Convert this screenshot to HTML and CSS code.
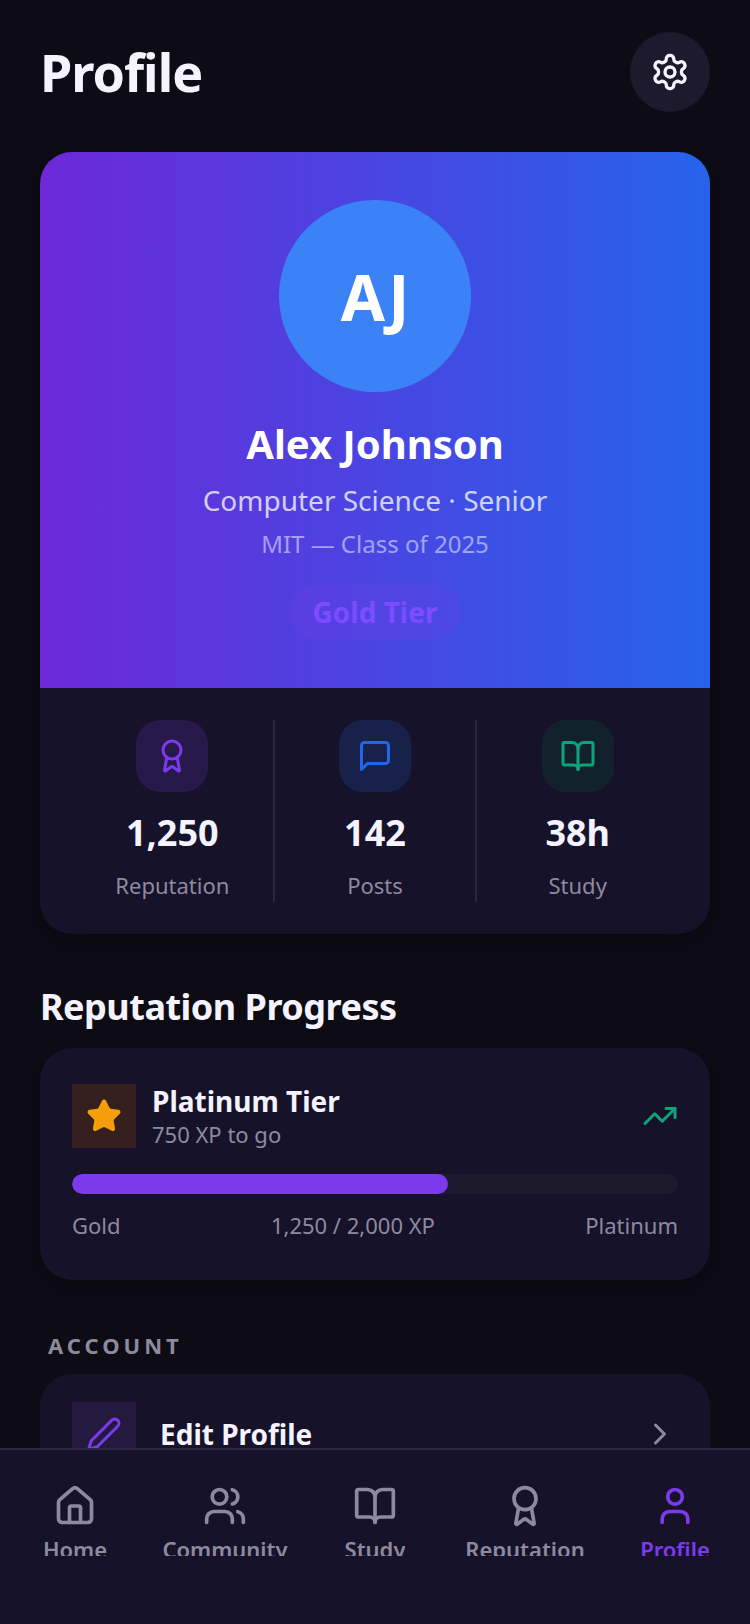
FILE: index.html
```html
<!DOCTYPE html>
<html lang="en">
<head>
<meta charset="utf-8">
<title>Profile</title>
<link rel="stylesheet" href="styles.css">
</head>
<body>
<div class="app">
  <main class="main">
    <header class="header">
      <h1 class="title">Profile</h1>
      <button class="settings" aria-label="Settings">
        <svg class="ic40" viewBox="0 0 24 24"><path d="M12.22 2h-.44a2 2 0 0 0-2 2v.18a2 2 0 0 1-1 1.73l-.43.25a2 2 0 0 1-2 0l-.15-.08a2 2 0 0 0-2.73.73l-.22.38a2 2 0 0 0 .73 2.73l.15.1a2 2 0 0 1 1 1.72v.51a2 2 0 0 1-1 1.74l-.15.09a2 2 0 0 0-.73 2.73l.22.38a2 2 0 0 0 2.73.73l.15-.08a2 2 0 0 1 2 0l.43.25a2 2 0 0 1 1 1.73V20a2 2 0 0 0 2 2h.44a2 2 0 0 0 2-2v-.18a2 2 0 0 1 1-1.73l.43-.25a2 2 0 0 1 2 0l.15.08a2 2 0 0 0 2.73-.73l.22-.39a2 2 0 0 0-.73-2.73l-.15-.08a2 2 0 0 1-1-1.74v-.5a2 2 0 0 1 1-1.74l.15-.09a2 2 0 0 0 .73-2.73l-.22-.38a2 2 0 0 0-2.73-.73l-.15.08a2 2 0 0 1-2 0l-.43-.25a2 2 0 0 1-1-1.73V4a2 2 0 0 0-2-2z"/><circle cx="12" cy="12" r="3"/></svg>
      </button>
    </header>

    <section class="profile-card">
      <div class="hero">
        <div class="avatar">AJ</div>
        <div class="name">Alex Johnson</div>
        <div class="major">Computer Science · Senior</div>
        <div class="school">MIT — Class of 2025</div>
        <div class="tier">Gold Tier</div>
      </div>
      <div class="stats">
        <div class="stat">
          <div class="stat-icon purple"><svg class="ic36" viewBox="0 0 24 24"><path d="m15.477 12.89 1.515 8.526a.5.5 0 0 1-.81.47l-3.58-2.687a1 1 0 0 0-1.197 0l-3.586 2.686a.5.5 0 0 1-.81-.469l1.514-8.526"/><circle cx="12" cy="8" r="6"/></svg></div>
          <div class="stat-value">1,250</div>
          <div class="stat-label">Reputation</div>
        </div>
        <div class="stat">
          <div class="stat-icon blue"><svg class="ic36" viewBox="0 0 24 24"><path d="M21 15a2 2 0 0 1-2 2H7l-4 4V5a2 2 0 0 1 2-2h14a2 2 0 0 1 2 2z"/></svg></div>
          <div class="stat-value">142</div>
          <div class="stat-label">Posts</div>
        </div>
        <div class="stat">
          <div class="stat-icon green"><svg class="ic36" viewBox="0 0 24 24"><path d="M12 7v14"/><path d="M3 18a1 1 0 0 1-1-1V4a1 1 0 0 1 1-1h5a4 4 0 0 1 4 4 4 4 0 0 1 4-4h5a1 1 0 0 1 1 1v13a1 1 0 0 1-1 1h-6a3 3 0 0 0-3 3 3 3 0 0 0-3-3z"/></svg></div>
          <div class="stat-value">38h</div>
          <div class="stat-label">Study</div>
        </div>
      </div>
    </section>

    <h2 class="section-title">Reputation Progress</h2>
    <section class="progress-card">
      <div class="progress-top">
        <div class="star-box"><svg class="ic36 star" viewBox="0 0 24 24"><path d="M11.525 2.295a.53.53 0 0 1 .95 0l2.31 4.679a2.123 2.123 0 0 0 1.595 1.16l5.166.756a.53.53 0 0 1 .294.904l-3.736 3.638a2.123 2.123 0 0 0-.611 1.878l.882 5.14a.53.53 0 0 1-.771.56l-4.618-2.428a2.122 2.122 0 0 0-1.973 0L6.396 21.01a.53.53 0 0 1-.77-.56l.881-5.139a2.122 2.122 0 0 0-.611-1.879L2.16 9.795a.53.53 0 0 1 .294-.906l5.165-.755a2.122 2.122 0 0 0 1.597-1.16z"/></svg></div>
        <div class="progress-text">
          <div class="progress-title">Platinum Tier</div>
          <div class="progress-sub">750 XP to go</div>
        </div>
        <svg class="ic36 trend" viewBox="0 0 24 24"><polyline points="22 7 13.5 15.5 8.5 10.5 2 17"/><polyline points="16 7 22 7 22 13"/></svg>
      </div>
      <div class="bar"><div class="bar-fill"></div></div>
      <div class="bar-labels"><span>Gold</span><span>1,250 / 2,000 XP</span><span>Platinum</span></div>
    </section>

    <div class="account-label">ACCOUNT</div>
    <section class="account-card">
      <div class="row">
        <div class="row-icon"><svg class="ic36" viewBox="0 0 24 24"><path d="M21.174 6.812a1 1 0 0 0-3.986-3.987L3.842 16.174a2 2 0 0 0-.5.83l-1.321 4.352a.5.5 0 0 0 .623.622l4.353-1.32a2 2 0 0 0 .83-.497z"/></svg></div>
        <div class="row-title">Edit Profile</div>
        <svg class="ic36 chev" viewBox="0 0 24 24"><path d="m9 18 6-6-6-6"/></svg>
      </div>
    </section>
  </main>

  <nav class="nav">
    <div class="nav-item">
      <svg class="ic44" viewBox="0 0 24 24"><path d="M15 21v-8a1 1 0 0 0-1-1h-4a1 1 0 0 0-1 1v8"/><path d="M3 10a2 2 0 0 1 .709-1.528l7-5.999a2 2 0 0 1 2.582 0l7 5.999A2 2 0 0 1 21 10v9a2 2 0 0 1-2 2H5a2 2 0 0 1-2-2z"/></svg>
      <span class="nav-label">Home</span>
    </div>
    <div class="nav-item">
      <svg class="ic44" viewBox="0 0 24 24"><path d="M16 21v-2a4 4 0 0 0-4-4H6a4 4 0 0 0-4 4v2"/><circle cx="9" cy="7" r="4"/><path d="M22 21v-2a4 4 0 0 0-3-3.87"/><path d="M16 3.13a4 4 0 0 1 0 7.75"/></svg>
      <span class="nav-label">Community</span>
    </div>
    <div class="nav-item">
      <svg class="ic44" viewBox="0 0 24 24"><path d="M12 7v14"/><path d="M3 18a1 1 0 0 1-1-1V4a1 1 0 0 1 1-1h5a4 4 0 0 1 4 4 4 4 0 0 1 4-4h5a1 1 0 0 1 1 1v13a1 1 0 0 1-1 1h-6a3 3 0 0 0-3 3 3 3 0 0 0-3-3z"/></svg>
      <span class="nav-label">Study</span>
    </div>
    <div class="nav-item">
      <svg class="ic44" viewBox="0 0 24 24"><path d="m15.477 12.89 1.515 8.526a.5.5 0 0 1-.81.47l-3.58-2.687a1 1 0 0 0-1.197 0l-3.586 2.686a.5.5 0 0 1-.81-.469l1.514-8.526"/><circle cx="12" cy="8" r="6"/></svg>
      <span class="nav-label">Reputation</span>
    </div>
    <div class="nav-item active">
      <svg class="ic44" viewBox="0 0 24 24"><path d="M19 21v-2a4 4 0 0 0-4-4H9a4 4 0 0 0-4 4v2"/><circle cx="12" cy="7" r="4"/></svg>
      <span class="nav-label">Profile</span>
    </div>
  </nav>
</div>
</body>
</html>
```

FILE: styles.css
```css
* { box-sizing: border-box; margin: 0; padding: 0; }
html, body { width: 750px; height: 1624px; overflow: hidden; }
body { background: #0d0b14; font-family: "Noto Sans", "Open Sans", sans-serif; color: #f5f3ff; }

svg { fill: none; stroke: currentColor; stroke-width: 2; stroke-linecap: round; stroke-linejoin: round; display: block; flex: none; }
.ic36 { width: 36px; height: 36px; }
.ic40 { width: 40px; height: 40px; }
.ic44 { width: 44px; height: 44px; }

.app { width: 750px; height: 1624px; display: flex; flex-direction: column; overflow: hidden; }
.main { flex: 1; min-height: 0; overflow: hidden; padding: 32px 40px 0; }

.header { display: flex; justify-content: space-between; align-items: center; height: 80px; margin-bottom: 40px; }
.title { font-size: 52px; font-weight: 700; color: #f5f3ff; line-height: 72px; letter-spacing: -1px; }
.settings { width: 80px; height: 80px; border: 0; border-radius: 50%; background: #1e1a2e; color: #f5f3ff; display: flex; align-items: center; justify-content: center; }

.profile-card { height: 782px; border-radius: 32px; overflow: hidden; background: #16122a; box-shadow: 0 8px 32px rgba(0,0,0,.3); }
.hero { height: 536px; background: linear-gradient(90deg, #6d28d9, #2563eb); display: flex; flex-direction: column; align-items: center; padding-top: 48px; }
.avatar { width: 192px; height: 192px; border-radius: 50%; background: #3b82f6; color: #fff; display: flex; align-items: center; justify-content: center; font-size: 64px; font-weight: 700; }
.name { margin-top: 24px; font-size: 40px; line-height: 56px; font-weight: 700; color: #fff; }
.major { margin-top: 8px; font-size: 28px; line-height: 40px; color: rgba(255,255,255,.75); }
.school { margin-top: 8px; font-size: 24px; line-height: 32px; color: rgba(255,255,255,.5); }
.tier { margin-top: 24px; height: 56px; padding: 0 24px; border-radius: 28px; background: rgba(124,58,237,.2); color: #7c4dff; font-size: 28px; font-weight: 700; line-height: 56px; }

.stats { height: 246px; padding: 32px 32px 32px; display: flex; }
.stat { flex: 1; display: flex; flex-direction: column; align-items: center; height: 182px; }
.stat + .stat { border-left: 2px solid #2a2640; }
.stat-icon { width: 72px; height: 72px; border-radius: 24px; display: flex; align-items: center; justify-content: center; }
.purple { background: #271a4a; color: #7c3aed; }
.blue { background: #17214a; color: #2563eb; }
.green { background: #12222d; color: #10a37a; }
.stat-value { margin-top: 16px; font-size: 36px; line-height: 50px; font-weight: 700; color: #f5f3ff; }
.stat-label { margin-top: 12px; font-size: 22px; line-height: 30px; color: #8e8a9e; }

.section-title { margin-top: 48px; font-size: 36px; line-height: 50px; font-weight: 700; color: #f5f3ff; letter-spacing: -.5px; }

.progress-card { margin-top: 16px; height: 232px; border-radius: 32px; background: #16122a; padding: 36px 32px 0; box-shadow: 0 8px 32px rgba(0,0,0,.3); }
.progress-top { display: flex; align-items: center; gap: 16px; height: 64px; }
.star-box { width: 64px; height: 64px; background: #35201f; display: flex; align-items: center; justify-content: center; }
.star { color: #f59e0b; fill: #f59e0b; }
.progress-text { flex: 1; }
.progress-title { font-size: 28px; line-height: 36px; font-weight: 700; color: #f5f3ff; }
.progress-sub { font-size: 22px; line-height: 30px; color: #8e8a9e; }
.trend { color: #10a37a; }
.bar { margin-top: 26px; height: 20px; border-radius: 10px; background: #1e1a2e; overflow: hidden; }
.bar-fill { width: 62%; height: 100%; border-radius: 10px; background: #7c3aed; }
.bar-labels { margin-top: 16px; display: flex; justify-content: space-between; font-size: 22px; line-height: 30px; color: #8e8a9e; }

.account-label { margin-top: 50px; padding-left: 8px; font-size: 22px; line-height: 30px; font-weight: 700; letter-spacing: 4px; color: #8e8a9e; }
.account-card { margin-top: 14px; border-radius: 32px; background: #16122a; padding: 28px 32px; }
.row { display: flex; align-items: center; height: 64px; }
.row-icon { width: 64px; height: 64px; background: #241a3f; color: #7c3aed; display: flex; align-items: center; justify-content: center; }
.row-title { flex: 1; margin-left: 24px; font-size: 28px; font-weight: 700; color: #f5f3ff; }
.chev { color: #8e8a9e; }

.nav { flex: none; height: 176px; border-top: 2px solid #2a2640; background: #16122a; display: flex; padding-top: 34px; }
.nav-item { width: 150px; padding: 0 12px; height: 80px; display: flex; flex-direction: column; align-items: center; gap: 14px; color: #8e8a9e; }
.nav-label { display: block; max-width: 100%; font-size: 22px; line-height: 14px; height: 14px; font-weight: 600; white-space: nowrap; overflow: hidden; text-overflow: ellipsis; }
.active { color: #7c3aed; }
```
